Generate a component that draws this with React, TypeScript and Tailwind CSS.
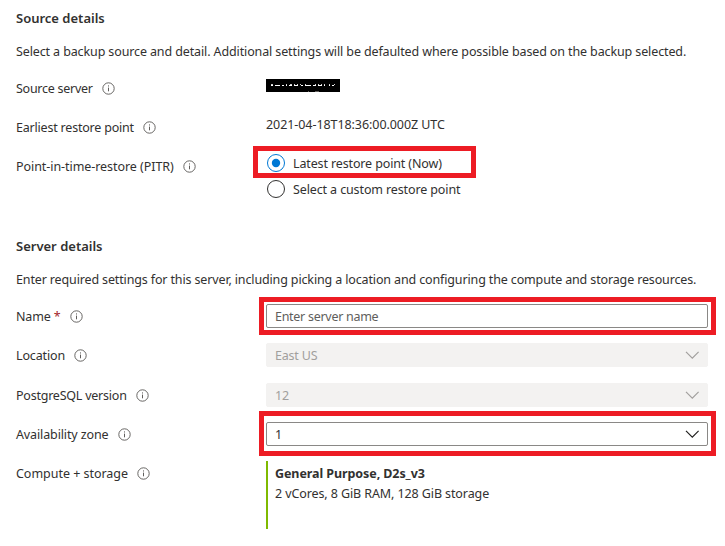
import type { ReactNode } from "react";

function InfoIcon() {
  return (
    <svg className="block h-[13px] w-[13px] shrink-0" viewBox="0 0 13 13" fill="none">
      <circle cx="6.5" cy="6.5" r="5.7" stroke="#605e5c" strokeWidth="0.95" />
      <path d="M6.5 5.6V9.3" stroke="#605e5c" strokeWidth="1" />
      <path d="M6.5 3.4V4.5" stroke="#605e5c" strokeWidth="1" />
    </svg>
  );
}

function Chevron({ color }: { color: string }) {
  return (
    <svg className="block h-[8px] w-[14px]" viewBox="0 0 14 8" fill="none">
      <path d="M1 0.9L7.3 7.1L13.6 0.9" stroke={color} strokeWidth="1.2" />
    </svg>
  );
}

function Row({ label, tracking, required, className, children }: { label: string; tracking: string; required?: boolean; className: string; children: ReactNode }) {
  return (
    <div className={`flex items-start ${className}`}>
      <div className="flex h-6 w-[250px] shrink-0 items-center">
        <span className={`pt-[2px] ${tracking}`}>{label}</span>
        {required && <span className="ml-[3px] pt-[2px] text-[#a4262c]">*</span>}
        <span className="ml-[9px]"><InfoIcon /></span>
      </div>
      {children}
    </div>
  );
}

function Select({ value, disabled }: { value: string; disabled?: boolean }) {
  return (
    <div className={`flex h-6 w-[442px] items-center justify-between rounded-[2px] border pl-2 pr-2 ${disabled ? "border-[#f3f2f1] bg-[#f3f2f1] text-[#a19f9d]" : "border-[#8a8886] bg-white"}`}>
      <span className="pt-[2px] tracking-[-0.2px]">{value}</span>
      <Chevron color={disabled ? "#a19f9d" : "#201f1e"} />
    </div>
  );
}

function Highlight({ className }: { className: string }) {
  return <div className={`pointer-events-none absolute border-[5px] border-[#ed1c24] ${className}`} />;
}

export default function App() {
  return (
    <main className="h-[546px] w-[725px] overflow-hidden whitespace-nowrap bg-white pl-4 pt-2 font-['Noto_Sans',sans-serif] text-[12.5px] leading-5 text-[#323130]">
      <section>
        <h2 className="h-5 text-[13px] font-semibold tracking-normal">Source details</h2>
        <p className="mt-[13px] h-5 pt-px tracking-[-0.12px]">Select a backup source and detail. Additional settings will be defaulted where possible based on the backup selected.</p>
        <Row label="Source server" tracking="tracking-[-0.26px]" className="mt-[15px] h-6">
          <svg className="mt-[3px] block h-[14px] w-[74px]" viewBox="0 0 74 14" shapeRendering="crispEdges">
            <rect width="74" height="13" fill="#000" />
            <path d="M5 5.5H7M20 5.5H21M24 5.5H26M28 5.5H29M31 5.5H32M34 5.5H35M39 5.5H40M49 5.5H50M52 5.5H53M55 5.5H56M58 5.5H59M63 5.5H64M68 5.5H69" stroke="#cfcfcf" />
            <path d="M5 6.5H7M9 6.5H14M16 6.5H18M20 6.5H21M23 6.5H26M28 6.5H32M35 6.5H37M39 6.5H45M47 6.5H50M52 6.5H56M58 6.5H59M63 6.5H64M66 6.5H68" stroke="#fff" />
            <path d="M42 12.5H43M49 12.5H53" stroke="#605e5c" />
          </svg>
        </Row>
        <Row label="Earliest restore point" tracking="tracking-[-0.2px]" className="mt-[15px] h-6">
          <span className="tracking-[-0.07px]">2021-04-18T18:36:00.000Z UTC</span>
        </Row>
        <Row label="Point-in-time-restore (PITR)" tracking="tracking-[-0.06px]" className="mt-[15px] h-[50px]">
          <div className="relative">
            <div className="flex h-[18px] items-center gap-2">
              <span className="flex h-[18px] w-[19px] items-center justify-center">
                <svg className="block h-[18px] w-[18px]" viewBox="0 0 18 18"><circle cx="9" cy="9" r="8.5" fill="none" stroke="#0078d4" /><circle cx="9" cy="9" r="4.2" fill="#0078d4" /></svg>
              </span>
              <span className="pt-[2px] tracking-[-0.13px]">Latest restore point (Now)</span>
            </div>
            <div className="mt-2 flex h-[18px] items-center gap-2">
              <span className="flex h-[18px] w-[19px] items-center justify-center">
                <svg className="block h-[18px] w-[18px]" viewBox="0 0 18 18"><circle cx="9" cy="9" r="8.5" fill="none" stroke="#323130" /></svg>
              </span>
              <span className="pt-[2px] tracking-[-0.12px]">Select a custom restore point</span>
            </div>
            <Highlight className="-left-[13px] -top-2 h-8 w-[223px]" />
          </div>
        </Row>
      </section>
      <section className="mt-8">
        <h2 className="h-5 text-[13px] font-semibold tracking-normal">Server details</h2>
        <p className="mt-[13px] h-5 pt-px tracking-[-0.138px]">Enter required settings for this server, including picking a location and configuring the compute and storage resources.</p>
        <Row label="Name" required tracking="tracking-[-0.15px]" className="mt-[15px]">
          <div className="relative">
            <input className="block h-6 w-[442px] rounded-[2px] border border-[#8a8886] bg-white px-2 text-[12.5px] tracking-[-0.28px] outline-none placeholder:text-[#605e5c]" placeholder="Enter server name" />
            <Highlight className="-left-[7px] -top-[7px] h-[38px] w-[457px]" />
          </div>
        </Row>
        <Row label="Location" tracking="tracking-[-0.15px]" className="mt-[15px]">
          <Select value="East US" disabled />
        </Row>
        <Row label="PostgreSQL version" tracking="tracking-[-0.23px]" className="mt-4">
          <Select value="12" disabled />
        </Row>
        <Row label="Availability zone" tracking="tracking-[-0.12px]" className="mt-[15px]">
          <div className="relative">
            <Select value="1" />
            <Highlight className="-left-[7px] -top-[11px] h-[45px] w-[457px]" />
          </div>
        </Row>
        <Row label="Compute + storage" tracking="tracking-[-0.03px]" className="mt-[15px]">
          <div className="h-[68px] border-l-2 border-[#7fba00] pl-[7px] pt-[3px]">
            <div className="h-5 font-bold tracking-[-0.08px]">General Purpose, D2s_v3</div>
            <div className="h-5 tracking-[-0.1px]">2 vCores, 8 GiB RAM, 128 GiB storage</div>
          </div>
        </Row>
      </section>
    </main>
  );
}
